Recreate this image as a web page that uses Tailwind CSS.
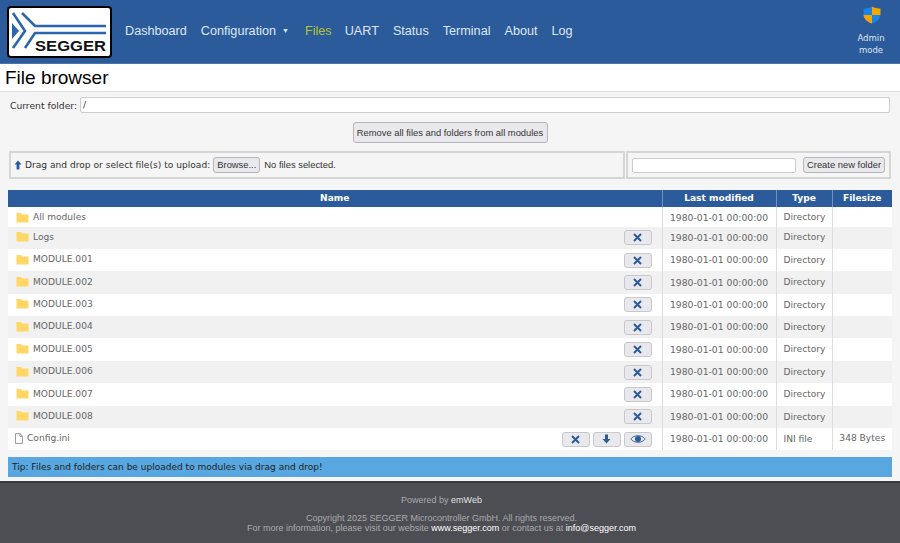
<!DOCTYPE html>
<html lang="en">
<head>
  <meta charset="UTF-8">
  <title>File browser</title>
  <script src="https://cdn.jsdelivr.net/npm/@tailwindcss/browser@4"></script>
</head>
<body class="bg-[#f5f5f5] h-[543px] overflow-hidden flex flex-col font-['DejaVu_Sans',sans-serif] text-[9.1px] text-[#333]">

<!-- Header -->
<header class="h-[64px] bg-[#2b5b9b] border-b border-[#4a74ab] flex items-center pl-[7px] pr-[15px] font-['Liberation_Sans',sans-serif] shrink-0">
  <div class="w-[105px] h-[52px] bg-white border-[2px] border-black rounded-[4px] shrink-0 relative">
    <svg width="101" height="48" viewBox="0 0 101 48" class="absolute left-0 top-0">
      <g fill="none" stroke="#2b66ad" stroke-width="2.6">
        <path d="M4 5 L16 23 L4 40"/>
        <path d="M13 5 L26 18 H97"/>
        <path d="M97 25 H26 L16 40"/>
      </g>
      <path d="M3 15 L10 23 L3 31 Z" fill="#2b66ad"/>
      <text x="26" y="43" font-family="Liberation Sans" font-weight="700" font-size="15.5" fill="#111" textLength="71" lengthAdjust="spacingAndGlyphs">SEGGER</text>
    </svg>
  </div>
  <nav class="flex items-center gap-[14px] text-[12.65px] text-[#dfe7f2] ml-[13px]">
    <span>Dashboard</span>
    <span class="flex items-center">Configuration<span class="text-[7px] ml-[6px]">▼</span></span>
    <span class="text-[#b5c334] ml-[2px] -mr-[1px]">Files</span>
    <span>UART</span>
    <span>Status</span>
    <span>Terminal</span>
    <span>About</span>
    <span>Log</span>
  </nav>
  <div class="ml-auto w-[28px] flex flex-col items-center text-[8.5px] leading-[12px] text-[#dfe7f2] font-['DejaVu_Sans',sans-serif] -mt-[1px]">
    <svg width="18" height="18" viewBox="0 0 18 18" class="mb-[8px] ml-[2px]">
      <path d="M9 0.5 C6.5 2 4 2.6 0.5 2.6 V9 H9 Z" fill="#1a84e8"/>
      <path d="M9 0.5 C11.5 2 14 2.6 17.5 2.6 V9 H9 Z" fill="#f7a600"/>
      <path d="M0.5 9 H9 V17.5 C4.5 16 1 13.5 0.5 9 Z" fill="#f7a600"/>
      <path d="M17.5 9 H9 V17.5 C13.5 16 17 13.5 17.5 9 Z" fill="#1a84e8"/>
    </svg>
    <span>Admin</span>
    <span>mode</span>
  </div>
</header>

<!-- Title -->
<div class="h-[28px] bg-white border-b border-[#ddd] pl-[5px] text-[19px] leading-[27px] text-black font-['Liberation_Sans',sans-serif] shrink-0">File browser</div>

<main class="flex-1 px-[8px] text-[#333]">
  <!-- Current folder -->
  <div class="flex items-center pl-[2px] pr-[2px] mt-[5px] h-[16px]">
    <span class="mr-[3px] pt-[2px] text-[9.2px]">Current folder:</span>
    <div class="flex-1 h-[16px] bg-white border border-[#ccc] rounded-[2px] pl-[2px] leading-[15px]">/</div>
  </div>

  <div class="flex justify-center mt-[9px]">
    <button class="h-[21px] w-[195px] pt-[2px] bg-[#e9e9ed] border border-[#b5b5ba] rounded-[3px] whitespace-nowrap font-['Liberation_Sans',sans-serif] text-[9.4px]">Remove all files and folders from all modules</button>
  </div>

  <!-- Upload and new folder -->
  <div class="flex mt-[8px] pl-[1px] pr-[1px] h-[28px]">
    <div class="flex items-center w-[616px] shrink-0 border-2 border-[#d6d6d6] pl-[3px]">
      <svg width="8" height="10" viewBox="0 0 8 10" class="mr-[3px]"><path d="M2.6 9.5 H5.4 V4.5 H7.5 L4 0.5 L0.5 4.5 H2.6 Z" fill="#2b5b9b"/></svg>
      <span class="pt-[2px]">Drag and drop or select file(s) to upload:</span>
      <button class="h-[16px] ml-[3px] px-[3px] bg-[#e9e9ed] border border-[#b5b5ba] rounded-[3px] whitespace-nowrap font-['Liberation_Sans',sans-serif] text-[9.4px]">Browse...</button>
      <span class="ml-[4px] font-['Liberation_Sans',sans-serif] text-[9.4px]">No files selected.</span>
    </div>
    <div class="flex items-center flex-1 ml-[1px] border-2 border-[#d6d6d6] pl-[4px]">
      <div class="w-[164px] h-[15px] bg-white border border-[#ccc] rounded-[2px]"></div>
      <button class="h-[16px] ml-[7px] px-[3px] bg-[#e9e9ed] border border-[#b5b5ba] rounded-[3px] whitespace-nowrap font-['Liberation_Sans',sans-serif] text-[9.4px]">Create new folder</button>
    </div>
  </div>

  <!-- Files table -->
  <table class="w-[884px] table-fixed border-collapse mt-[11px]">
    <colgroup>
      <col class="w-[654px]"><col class="w-[114px]"><col class="w-[56px]"><col class="w-[60px]">
    </colgroup>
    <thead>
      <tr class="h-[17px] bg-[#2b5b9b] text-white font-bold text-center">
        <th>Name</th><th class="border-l border-[#6f92bf]">Last modified</th><th class="border-l border-[#6f92bf]">Type</th><th class="border-l border-[#6f92bf]">Filesize</th>
      </tr>
    </thead>
    <tbody id="linhas" class="text-[#666]"></tbody>
  </table>

  <div class="w-[884px] h-[20px] mt-[7px] bg-[#58a7e0] text-[#222] pl-[4px] leading-[20px] text-[9.03px]">Tip: Files and folders can be uploaded to modules via drag and drop!</div>
</main>

<!-- Footer -->
<footer class="h-[62px] bg-[#4d4e53] border-t-[2px] border-[#3a3b3f] shrink-0 text-center text-[9px] leading-[10px] text-[#a9aaad] font-['Liberation_Sans',sans-serif] pt-[12px] pr-[17px]">
  <div>Powered by <span class="text-[#e4e4e4]">emWeb</span></div>
  <div class="mt-[8px]">Copyright 2025 SEGGER Microcontroller GmbH. All rights reserved.</div>
  <div>For more information, please visit our website <span class="text-white">www.segger.com</span> or contact us at <span class="text-white">info@segger.com</span></div>
</footer>

<script>
const pasta = `<svg width="13" height="11" viewBox="0 0 13 11" class="mr-[4px]"><path d="M0.5 1 H5 L6.3 2.5 H12.5 V10.5 H0.5 Z" fill="#ffd766"/></svg>`;
const arquivo = `<svg width="8" height="11" viewBox="0 0 9 12" class="-ml-[1px] mr-[4px]"><path d="M0.5 0.5 H5.5 L8.5 3.5 V11.5 H0.5 Z M5.5 0.5 V3.5 H8.5" fill="#fff" stroke="#888"/></svg>`;
const iconeX = `<svg width="9" height="9" viewBox="0 0 9 9"><path d="M1 1 L8 8 M8 1 L1 8" stroke="#2b5b9b" stroke-width="2"/></svg>`;
const iconeBaixar = `<svg width="9" height="10" viewBox="0 0 9 10"><path d="M3 0.5 H6 V5 H8.5 L4.5 9.5 L0.5 5 H3 Z" fill="#2b5b9b"/></svg>`;
const iconeOlho = `<svg width="16" height="10" viewBox="0 0 16 10"><path d="M0.8 5 C4 0.6 12 0.6 15.2 5 C12 9.4 4 9.4 0.8 5 Z" fill="none" stroke="#2b5b9b" stroke-width="0.9"/><circle cx="8" cy="5" r="3" fill="#2b5b9b"/></svg>`;
const botao = icone => `<button class="w-[28px] h-[15px] bg-[#e9e9ed] border border-[#c8c8cc] rounded-[3px] flex items-center justify-center">${icone}</button>`;

const linhas = [
  ['All modules', pasta, ''],
  ['Logs', pasta, botao(iconeX)],
  ...[1, 2, 3, 4, 5, 6, 7, 8].map(n => [`MODULE.00${n}`, pasta, botao(iconeX)]),
  ['Config.ini', arquivo, botao(iconeX) + botao(iconeBaixar) + botao(iconeOlho), 'INI file', '348 Bytes'],
];

document.getElementById('linhas').innerHTML = linhas.map(([nome, icone, botoes, tipo, tamanho], i) => `
  <tr class="${i === 0 ? 'h-[19.5px]' : 'h-[22.4px]'} ${i % 2 ? 'bg-[#f1f1f1]' : 'bg-white'}">
    <td class="pl-[8px]"><div class="flex items-center justify-between ${i ? '-mt-[3px]' : ''}">
      <span class="flex items-center pt-[1px]">${icone}<span class="pt-[2px]">${nome}</span></span>
      <span class="flex gap-[3px] mr-[10px] mt-[3px]">${botoes}</span>
    </div></td>
    <td class="border-l border-[#ddd] text-center text-[9.25px] ${i === 0 ? 'pt-[2px]' : ''}">1980-01-01 00:00:00</td>
    <td class="border-l border-[#ddd] pl-[7px] ${i === 0 ? 'pt-[2px]' : 'pt-[1px]'}">${tipo || 'Directory'}</td>
    <td class="border-l border-[#ddd] text-center">${tamanho || ''}</td>
  </tr>`).join('');
</script>

</body>
</html>
